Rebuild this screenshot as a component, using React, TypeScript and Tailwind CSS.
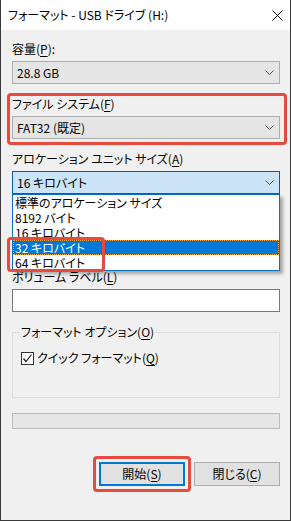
import React from "react";

const U = ({ c }: { c: string }) => <span className="underline underline-offset-[2px] decoration-1">{c}</span>;

const Chevron = () => (
  <svg width="9" height="6" viewBox="0 0 9 6" className="shrink-0">
    <polyline points="0.5,0.5 4.5,4.5 8.5,0.5" fill="none" stroke="#505050" strokeWidth="1" />
  </svg>
);

const Combo = ({ text, focused }: { text: string; focused?: boolean }) => (
  <div
    className={
      "h-[23px] flex items-center justify-between pl-[4px] pr-[5px] border " +
      (focused ? "bg-[#cce4f7] border-[#0a5ea8]" : "bg-[#e5e5e5] border-[#adadad]")
    }
  >
    <span className="leading-[16px]">{text}</span>
    <Chevron />
  </div>
);

export default function App() {
  return (
    <div className="w-[291px] h-[521px] bg-[#f0f0f0] border-x border-b border-[#3a3a3a] flex flex-col text-[12px] text-black font-['Noto_Sans_CJK_JP','Noto_Sans',sans-serif] [font-feature-settings:'palt'] overflow-hidden">
      <div className="h-[30px] shrink-0 bg-white flex items-center justify-between pl-[7px] pr-[7px]">
        <span className="leading-[16px]">フォーマット - USB ドライブ (H:)</span>
        <svg width="11" height="11" viewBox="0 0 11 11">
          <line x1="0.5" y1="0.5" x2="10.5" y2="10.5" stroke="#000" strokeWidth="1" />
          <line x1="10.5" y1="0.5" x2="0.5" y2="10.5" stroke="#000" strokeWidth="1" />
        </svg>
      </div>

      <div className="flex flex-col pl-[11px] pr-[10px] pt-[11px]">
        <div className="flex flex-col gap-[4px]">
          <div className="h-[16px] leading-[16px]">容量(<U c="P" />):</div>
          <Combo text="28.8 GB" />
        </div>

        <div className="relative flex flex-col gap-[4px] mt-[12px]">
          <div className="h-[16px] leading-[16px]">ファイル システム(<U c="F" />)</div>
          <Combo text="FAT32 (既定)" />
          <div className="absolute -left-[5px] -right-[7px] -top-[3px] -bottom-[6px] border-[3px] border-[#e84a3f] rounded-[4px]" />
        </div>

        <div className="flex flex-col gap-[4px] mt-[12px]">
          <div className="h-[16px] leading-[16px]">アロケーション ユニット サイズ(<U c="A" />)</div>
          <div className="relative z-10">
            <Combo text="16 キロバイト" focused />
            <div className="absolute top-full left-0 right-0 bg-white border border-[#0a6fc8] shadow-[3px_3px_3px_rgba(0,0,0,0.3)] flex flex-col">
              <div className="h-[15px] leading-[15px] pl-[2px]">標準のアロケーション サイズ</div>
              <div className="h-[15px] leading-[15px] pl-[2px]">8192 バイト</div>
              <div className="h-[15px] leading-[15px] pl-[2px]">16 キロバイト</div>
              <div className="h-[15px] leading-[15px] pl-[2px] bg-[#0078d7] text-white outline-1 outline-dotted outline-[#f0a040] -outline-offset-1">32 キロバイト</div>
              <div className="h-[15px] leading-[15px] pl-[2px]">64 キロバイト</div>
              <div className="absolute -left-[6px] top-[42px] w-[98px] h-[35px] border-[3px] border-[#e84a3f] rounded-[4px]" />
            </div>
          </div>
        </div>

        <div className="flex flex-col gap-[4px] mt-[75px]">
          <div className="h-[16px] leading-[16px]">ボリューム ラベル(<U c="L" />)</div>
          <div className="h-[23px] bg-white border border-[#7a7a7a]" />
        </div>

        <div className="relative mt-[20px] h-[66px] border border-[#dcdcdc] pl-[8px] pt-[17px]">
          <div className="absolute -top-[9px] left-[7px] px-[1px] bg-[#f0f0f0] h-[16px] leading-[16px]">
            フォーマット オプション(<U c="O" />)
          </div>
          <div className="flex items-center h-[16px] gap-[3px]">
            <div className="w-[13px] h-[13px] border border-[#333] bg-white flex items-center justify-center">
              <svg width="11" height="11" viewBox="0 0 11 11">
                <polyline points="1.5,5.5 4,8.5 9.5,1.5" fill="none" stroke="#222" strokeWidth="1.2" />
              </svg>
            </div>
            <span className="leading-[16px]">クイック フォーマット(<U c="Q" />)</span>
          </div>
        </div>

        <div className="mt-[15px] h-[16px] bg-[#e6e6e6] border border-[#bcbcbc]" />

        <div className="mt-[33px] flex justify-end gap-[9px]">
          <div className="relative">
            <div className="w-[86px] h-[24px] bg-[#e1e1e1] border-2 border-[#0078d7] flex items-center justify-center leading-[16px]">
              開始(<U c="S" />)
            </div>
            <div className="absolute -inset-[6px] border-[3px] border-[#e84a3f] rounded-[4px]" />
          </div>
          <div className="w-[86px] h-[24px] bg-[#e1e1e1] border border-[#adadad] flex items-center justify-center leading-[16px]">
            閉じる(<U c="C" />)
          </div>
        </div>
      </div>
    </div>
  );
}
